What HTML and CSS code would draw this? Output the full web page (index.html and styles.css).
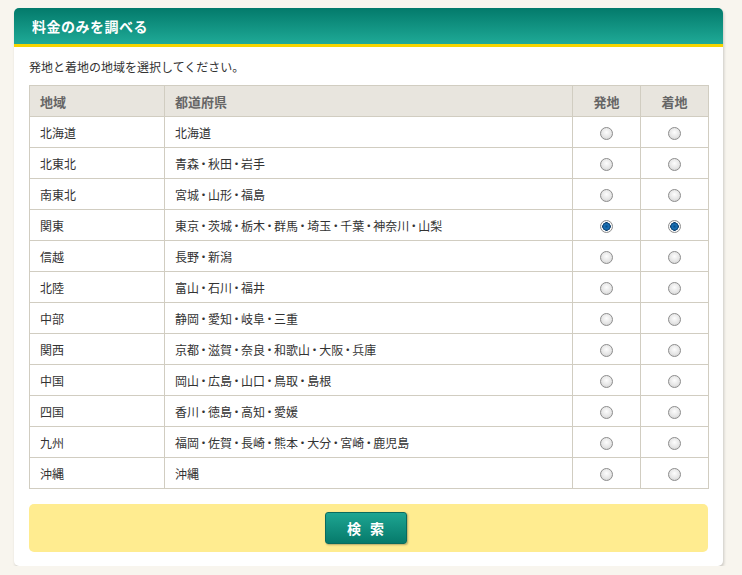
FILE: index.html
```html
<!DOCTYPE html>
<html lang="ja">
<head>
<meta charset="utf-8">
<title>料金のみを調べる</title>
<link rel="stylesheet" href="styles.css">
</head>
<body>
<div class="card">
  <h2 class="card-title">料金のみを調べる</h2>
  <div class="card-body">
    <p class="lead">発地と着地の地域を選択してください。</p>
    <table class="area-table">
      <thead>
        <tr><th class="c-area">地域</th><th class="c-pref">都道府県</th><th class="c-radio">発地</th><th class="c-radio">着地</th></tr>
      </thead>
      <tbody>
        <tr><td>北海道</td><td>北海道</td><td class="c-radio"><span class="radio"></span></td><td class="c-radio"><span class="radio"></span></td></tr>
        <tr><td>北東北</td><td>青森<span class="sep">・</span>秋田<span class="sep">・</span>岩手</td><td class="c-radio"><span class="radio"></span></td><td class="c-radio"><span class="radio"></span></td></tr>
        <tr><td>南東北</td><td>宮城<span class="sep">・</span>山形<span class="sep">・</span>福島</td><td class="c-radio"><span class="radio"></span></td><td class="c-radio"><span class="radio"></span></td></tr>
        <tr><td>関東</td><td>東京<span class="sep">・</span>茨城<span class="sep">・</span>栃木<span class="sep">・</span>群馬<span class="sep">・</span>埼玉<span class="sep">・</span>千葉<span class="sep">・</span>神奈川<span class="sep">・</span>山梨</td><td class="c-radio"><span class="radio checked"></span></td><td class="c-radio"><span class="radio checked"></span></td></tr>
        <tr><td>信越</td><td>長野<span class="sep">・</span>新潟</td><td class="c-radio"><span class="radio"></span></td><td class="c-radio"><span class="radio"></span></td></tr>
        <tr><td>北陸</td><td>富山<span class="sep">・</span>石川<span class="sep">・</span>福井</td><td class="c-radio"><span class="radio"></span></td><td class="c-radio"><span class="radio"></span></td></tr>
        <tr><td>中部</td><td>静岡<span class="sep">・</span>愛知<span class="sep">・</span>岐阜<span class="sep">・</span>三重</td><td class="c-radio"><span class="radio"></span></td><td class="c-radio"><span class="radio"></span></td></tr>
        <tr><td>関西</td><td>京都<span class="sep">・</span>滋賀<span class="sep">・</span>奈良<span class="sep">・</span>和歌山<span class="sep">・</span>大阪<span class="sep">・</span>兵庫</td><td class="c-radio"><span class="radio"></span></td><td class="c-radio"><span class="radio"></span></td></tr>
        <tr><td>中国</td><td>岡山<span class="sep">・</span>広島<span class="sep">・</span>山口<span class="sep">・</span>鳥取<span class="sep">・</span>島根</td><td class="c-radio"><span class="radio"></span></td><td class="c-radio"><span class="radio"></span></td></tr>
        <tr><td>四国</td><td>香川<span class="sep">・</span>徳島<span class="sep">・</span>高知<span class="sep">・</span>愛媛</td><td class="c-radio"><span class="radio"></span></td><td class="c-radio"><span class="radio"></span></td></tr>
        <tr><td>九州</td><td>福岡<span class="sep">・</span>佐賀<span class="sep">・</span>長崎<span class="sep">・</span>熊本<span class="sep">・</span>大分<span class="sep">・</span>宮崎<span class="sep">・</span>鹿児島</td><td class="c-radio"><span class="radio"></span></td><td class="c-radio"><span class="radio"></span></td></tr>
        <tr><td>沖縄</td><td>沖縄</td><td class="c-radio"><span class="radio"></span></td><td class="c-radio"><span class="radio"></span></td></tr>
      </tbody>
    </table>
    <div class="actions">
      <button class="btn" type="button">検 索</button>
    </div>
  </div>
</div>
</body>
</html>
```

FILE: styles.css
```css
html, body {
  margin: 0;
  padding: 0;
}
body {
  background: #f8f5ee;
  font-family: "Noto Sans CJK JP", "Noto Sans", sans-serif;
  color: #333;
  padding: 8px 0 0 14px;
}
.card {
  width: 709px;
  height: 558px;
  background: #fff;
  border-radius: 5px;
  box-shadow: 1px 2px 3px rgba(0, 0, 0, 0.18);
  box-sizing: border-box;
  overflow: hidden;
}
.card-title {
  margin: 0;
  box-sizing: border-box;
  background: linear-gradient(#037a6b, #1faa97);
  border-bottom: 3px solid #f6d400;
  height: 39px;
  color: #fff;
  font-size: 14px;
  font-weight: bold;
  line-height: 36px;
  padding-left: 18px;
  letter-spacing: 0.5px;
}
.card-body {
  padding: 0 15px;
}
.lead {
  margin: 0;
  padding-top: 11px;
  height: 27px;
  font-size: 12px;
  line-height: 18px;
  color: #333;
}
.area-table {
  width: 680px;
  border-collapse: collapse;
  font-size: 12px;
}
.area-table th, .area-table td {
  border: 1px solid #d1cdc1;
  height: 31px;
  padding: 0 0 0 10px;
  text-align: left;
  box-sizing: border-box;
}
.area-table th {
  background: #e8e5de;
  color: #666;
  font-size: 13px;
  font-weight: bold;
}
.area-table .c-area { width: 135px; }
.area-table .c-pref { width: 408px; }
.area-table .c-radio {
  width: 68px;
  text-align: center;
  padding: 0;
}
.sep {
  margin: 0 -1.5px;
}
.radio {
  display: inline-block;
  width: 11px;
  height: 11px;
  border-radius: 50%;
  border: 1px solid #8e8e8e;
  background: radial-gradient(circle at 50% 40%, #fdfdfd 0, #e6e6e6 55%, #c9c9c9 100%);
  vertical-align: middle;
  position: relative;
  top: -1px;
}
.radio.checked {
  background: radial-gradient(circle, #0b4f8a 0, #1a73b8 2.5px, #0c3d6a 4px, #fff 4.5px, #e4e4e4 100%);
}
.actions {
  margin-top: 15px;
  height: 48px;
  background-color: #ffec90;
  border-radius: 5px;
  display: flex;
  align-items: center;
  justify-content: center;
}
.btn {
  width: 82px;
  height: 32px;
  margin-right: 6px;
  border: 1px solid #0a6b5e;
  border-radius: 3px;
  background: linear-gradient(#1ea592, #067a6b);
  color: #fff;
  font-family: inherit;
  font-size: 14px;
  font-weight: bold;
  letter-spacing: 3px;
  padding: 0 0 0 3px;
  box-shadow: 1px 1px 2px rgba(0, 0, 0, 0.3);
  cursor: pointer;
}
```
